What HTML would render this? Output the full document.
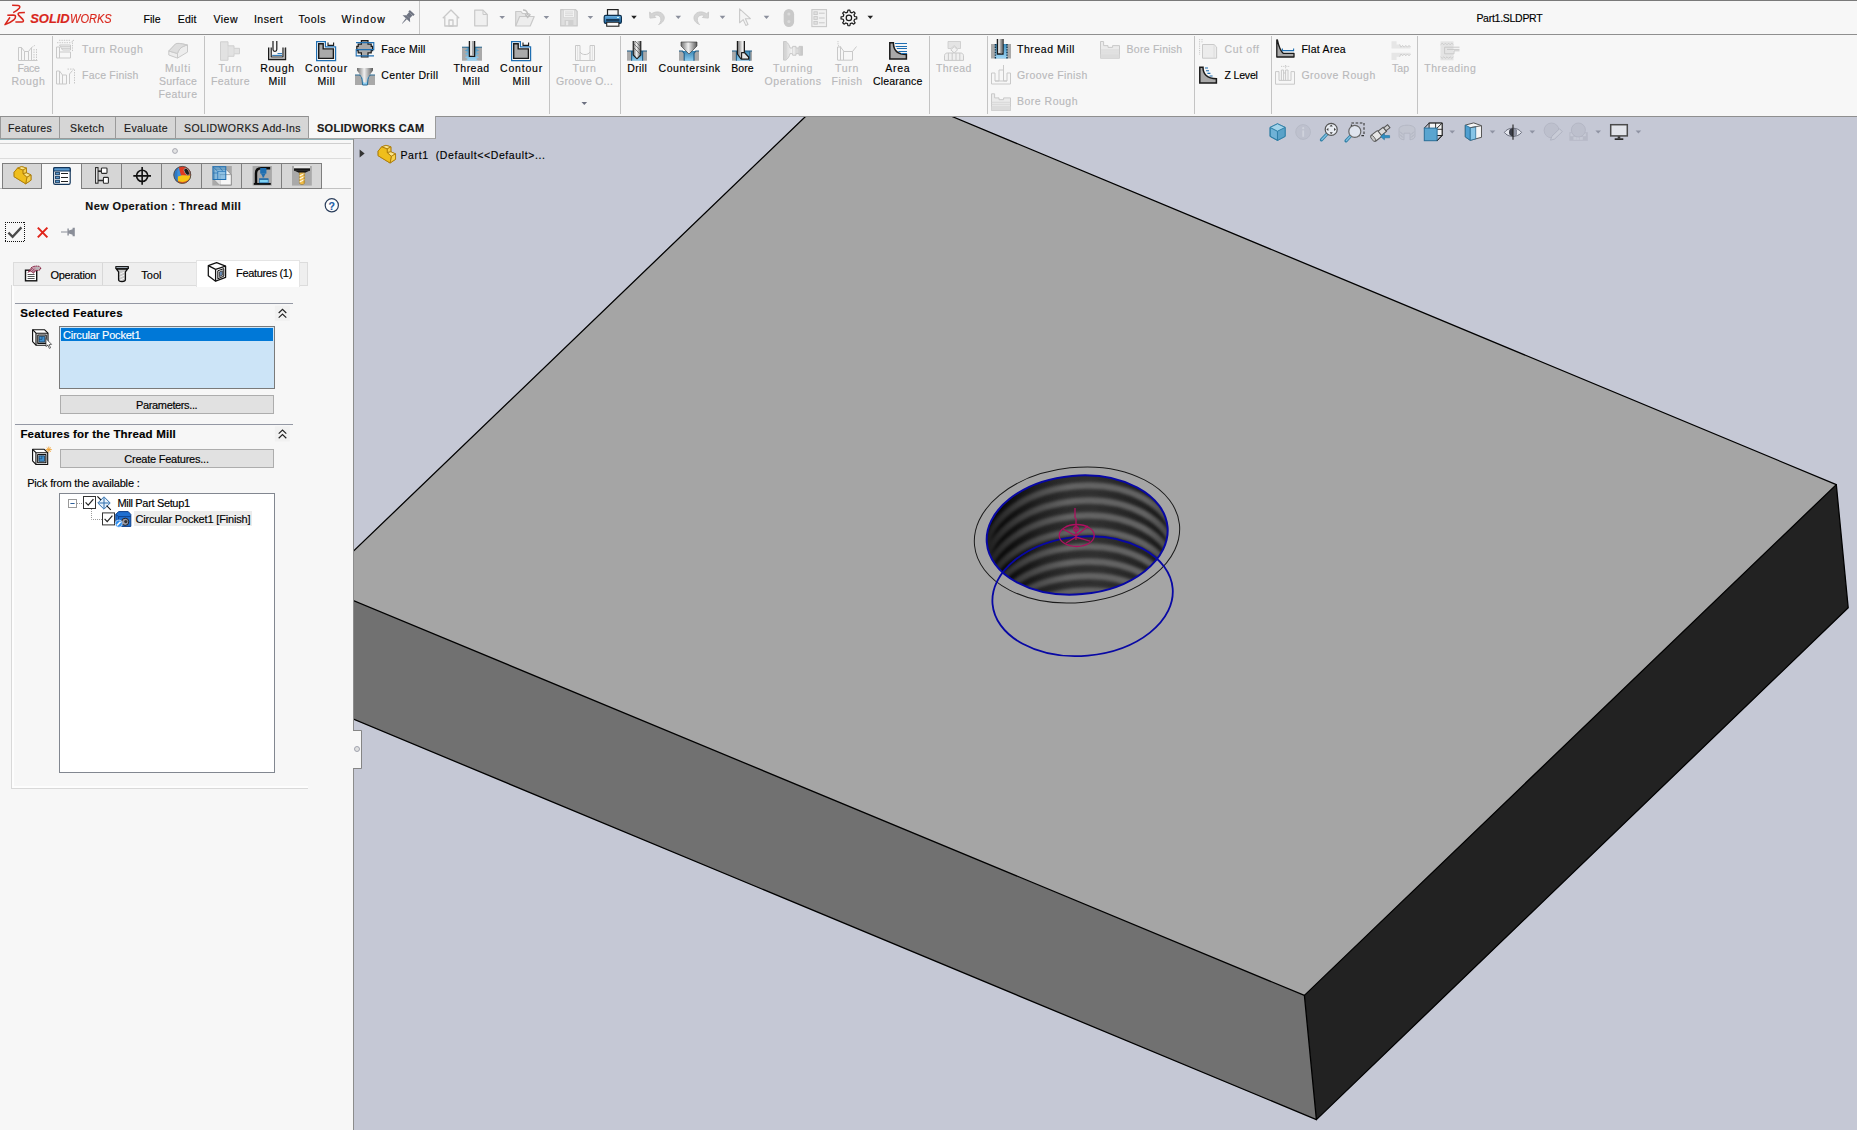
<!DOCTYPE html>
<html><head><meta charset="utf-8"><title>SOLIDWORKS CAM - Part1.SLDPRT</title>
<style>
html,body{margin:0;padding:0;background:#f7f7f7;}
#app{position:relative;width:1857px;height:1130px;overflow:hidden;background:#f7f7f7;font-family:"Liberation Sans",sans-serif;}
.t{position:absolute;white-space:pre;line-height:14px;-webkit-text-stroke:0.15px currentColor;}
.r{position:absolute;box-sizing:border-box;}
svg{position:absolute;left:0;top:0;}
</style></head>
<body><div id="app">
<div class="r" style="left:0px;top:0px;width:1857px;height:1px;background:#7a7a7a;"></div>
<div class="r" style="left:0px;top:34px;width:1857px;height:1px;background:#8f8f8f;"></div>
<div class="r" style="left:419px;top:1px;width:1px;height:33px;background:#c8c8c8;"></div>
<div class="r" style="left:0px;top:116px;width:309px;height:1px;background:#8f8f8f;"></div>
<div class="r" style="left:435px;top:116px;width:1422px;height:1px;background:#8f8f8f;"></div>
<div class="r" style="left:52px;top:36px;width:1px;height:78px;background:#c4c4c4;"></div>
<div class="r" style="left:204px;top:36px;width:1px;height:78px;background:#c4c4c4;"></div>
<div class="r" style="left:549px;top:36px;width:1px;height:78px;background:#c4c4c4;"></div>
<div class="r" style="left:620px;top:36px;width:1px;height:78px;background:#c4c4c4;"></div>
<div class="r" style="left:929px;top:36px;width:1px;height:78px;background:#c4c4c4;"></div>
<div class="r" style="left:987px;top:36px;width:1px;height:78px;background:#c4c4c4;"></div>
<div class="r" style="left:1194px;top:36px;width:1px;height:78px;background:#c4c4c4;"></div>
<div class="r" style="left:1271px;top:36px;width:1px;height:78px;background:#c4c4c4;"></div>
<div class="r" style="left:1417px;top:36px;width:1px;height:78px;background:#c4c4c4;"></div>
<div class="r" style="left:0px;top:117px;width:436px;height:22px;background:#d6d6d6;border:1px solid #9a9a9a;border-top:none;"></div>
<div class="r" style="left:59px;top:117px;width:1px;height:21px;background:#9a9a9a;"></div>
<div class="r" style="left:115px;top:117px;width:1px;height:21px;background:#9a9a9a;"></div>
<div class="r" style="left:175px;top:117px;width:1px;height:21px;background:#9a9a9a;"></div>
<div class="r" style="left:308px;top:116px;width:128px;height:23px;background:#f7f7f7;border-right:1px solid #9a9a9a;border-left:1px solid #9a9a9a;border-bottom:1px solid #a6a6a6;"></div>
<div class="r" style="left:0px;top:139px;width:353px;height:991px;background:#f7f7f7;"></div>
<div class="r" style="left:353px;top:139px;width:1px;height:991px;background:#8c8c8c;"></div>
<div class="r" style="left:0px;top:139px;width:353px;height:1px;background:#8fb2b8;"></div>
<div class="r" style="left:0px;top:143px;width:351px;height:1px;background:#cfcfcf;"></div>
<div class="r" style="left:0px;top:158px;width:351px;height:1px;background:#dcdcdc;"></div>
<div class="r" style="left:0px;top:188px;width:351px;height:1px;background:#c2c2c2;"></div>
<div class="r" style="left:2px;top:163px;width:320px;height:26px;background:#d6d6d6;border:1px solid #7e7e7e;"></div>
<div class="r" style="left:41px;top:164px;width:1px;height:24px;background:#7e7e7e;"></div>
<div class="r" style="left:81px;top:164px;width:1px;height:24px;background:#7e7e7e;"></div>
<div class="r" style="left:121px;top:164px;width:1px;height:24px;background:#7e7e7e;"></div>
<div class="r" style="left:161px;top:164px;width:1px;height:24px;background:#7e7e7e;"></div>
<div class="r" style="left:201px;top:164px;width:1px;height:24px;background:#7e7e7e;"></div>
<div class="r" style="left:241px;top:164px;width:1px;height:24px;background:#7e7e7e;"></div>
<div class="r" style="left:281px;top:164px;width:1px;height:24px;background:#7e7e7e;"></div>
<div class="r" style="left:41px;top:163px;width:41px;height:26px;background:#f7f7f7;border:1px solid #7e7e7e;border-bottom:none;"></div>
<div class="r" style="left:13px;top:262px;width:295px;height:24px;background:#efefef;border:1px solid #dcdcdc;"></div>
<div class="r" style="left:102px;top:263px;width:1px;height:22px;background:#d8d8d8;"></div>
<div class="r" style="left:196px;top:260px;width:104px;height:27px;background:#ffffff;border:1px solid #e4e4e4;border-bottom:none;"></div>
<div class="r" style="left:12px;top:286px;width:2px;height:502px;background:#fdfdfd;"></div>
<div class="r" style="left:12px;top:786px;width:296px;height:2px;background:#fdfdfd;"></div>
<div class="r" style="left:11px;top:285px;width:1px;height:504px;background:#d9d9d9;"></div>
<div class="r" style="left:11px;top:788px;width:297px;height:1px;background:#d9d9d9;"></div>
<div class="r" style="left:15px;top:303px;width:278px;height:1px;background:#9498a4;"></div>
<div class="r" style="left:59px;top:326px;width:216px;height:63px;background:#cce4f7;border:1px solid #7a7a7a;"></div>
<div class="r" style="left:61px;top:328px;width:212px;height:13px;background:#0078d7;"></div>
<div class="r" style="left:60px;top:395px;width:214px;height:19px;background:#e1e1e1;border:1px solid #adadad;"></div>
<div class="r" style="left:15px;top:424px;width:278px;height:1px;background:#9498a4;"></div>
<div class="r" style="left:60px;top:449px;width:214px;height:19px;background:#e1e1e1;border:1px solid #adadad;"></div>
<div class="r" style="left:59px;top:493px;width:216px;height:280px;background:#fff;border:1px solid #828790;"></div>
<div class="r" style="left:134px;top:511px;width:118px;height:15px;background:#ececec;"></div>
<div class="r" style="left:354px;top:139px;width:1503px;height:991px;background:#c5c8d5;"></div>
<div class="r" style="left:436px;top:117px;width:1421px;height:22px;background:#c5c8d5;"></div>
<svg width="1857" height="1130" viewBox="0 0 1857 1130">

<defs>
<clipPath id="vp"><path d="M354 139 H436 V117 H1857 V1130 H354 Z"/></clipPath>
<clipPath id="hole"><ellipse cx="1077.2" cy="535" rx="90.7" ry="59.3" transform="rotate(-5 1077.2 535)"/></clipPath>
<linearGradient id="holeg" x1="0" y1="0" x2="1" y2="0">
<stop offset="0" stop-color="#0c0c0c"/><stop offset="0.3" stop-color="#2a2a2a"/><stop offset="0.6" stop-color="#303030"/><stop offset="1" stop-color="#1a1a1a"/>
</linearGradient>
<linearGradient id="holesh" x1="0" y1="0" x2="1" y2="0">
<stop offset="0" stop-color="#000" stop-opacity="0.75"/><stop offset="0.22" stop-color="#000" stop-opacity="0.35"/><stop offset="0.45" stop-color="#000" stop-opacity="0"/><stop offset="0.85" stop-color="#000" stop-opacity="0"/><stop offset="1" stop-color="#000" stop-opacity="0.35"/>
</linearGradient>
<filter id="blur1" x="-10%" y="-10%" width="120%" height="120%"><feGaussianBlur stdDeviation="1.6"/></filter>
</defs>
<g clip-path="url(#vp)">
<polygon points="805.5,116.5 952,116.5 1836.3,484.6 1304.4,995.4 354,600.8 354,550.6" fill="#a5a5a5"/>
<polygon points="354,600.8 1304.4,995.4 1316.4,1119.6 354,719.4" fill="#717171"/>
<polygon points="1304.4,995.4 1836.3,484.6 1848.2,607.8 1316.4,1119.6" fill="#222222"/>
<g fill="none" stroke="#000" stroke-width="1.3" stroke-linejoin="round" stroke-linecap="round">
<polyline points="354,550.6 805.5,116.5"/>
<polyline points="952,116.5 1836.3,484.6 1304.4,995.4 354,600.8"/>
<polyline points="1836.3,484.6 1848.2,607.8 1316.4,1119.6 354,719.4"/>
<polyline points="1304.4,995.4 1316.4,1119.6"/>
</g>
<ellipse cx="1077.2" cy="535" rx="90.7" ry="59.3" transform="rotate(-5 1077.2 535)" fill="url(#holeg)"/>
<g clip-path="url(#hole)">
<g filter="url(#blur1)" fill="none" stroke="#646464" stroke-width="6.4">
<ellipse cx="1080" cy="548" rx="95" ry="62" transform="rotate(-5.5 1080 548)"/>
<ellipse cx="1080" cy="563" rx="95" ry="62" transform="rotate(-5.5 1080 563)"/>
<ellipse cx="1080" cy="578" rx="95" ry="62" transform="rotate(-5.5 1080 578)"/>
<ellipse cx="1080" cy="593.5" rx="95" ry="62" transform="rotate(-5.5 1080 593.5)"/>
<ellipse cx="1080" cy="609" rx="95" ry="62" transform="rotate(-5.5 1080 609)"/>
<ellipse cx="1080" cy="624" rx="95" ry="62" transform="rotate(-5.5 1080 624)"/>
<ellipse cx="1080" cy="638.5" rx="95" ry="62" transform="rotate(-5.5 1080 638.5)"/>
<ellipse cx="1080" cy="653" rx="95" ry="62" transform="rotate(-5.5 1080 653)"/>
</g>
<rect x="980" y="470" width="195" height="130" fill="url(#holesh)"/>
</g>
<ellipse cx="1077" cy="535" rx="103" ry="67.5" transform="rotate(-6 1077 535)" fill="none" stroke="#1a1a1a" stroke-width="1"/>
<ellipse cx="1077.2" cy="535" rx="90.7" ry="59.3" transform="rotate(-5 1077.2 535)" fill="none" stroke="#0808a4" stroke-width="2"/>
<ellipse cx="1082.6" cy="596.2" rx="90.4" ry="59.6" transform="rotate(-5 1082.6 596.2)" fill="none" stroke="#0808a4" stroke-width="1.8"/>
<g fill="none" stroke="#ae1060" stroke-width="1.3">
<ellipse cx="1076.7" cy="535.5" rx="17.5" ry="11"/>
<path d="M1075 508 V518 M1076 518 V540 M1063 529 L1076 536 L1088 526 M1066 543 L1076 537 L1090 541"/>
<circle cx="1076" cy="529" r="2.3"/>
</g>
</g>

<defs>
<linearGradient id="metal" x1="0" y1="0" x2="1" y2="0"><stop offset="0" stop-color="#6e6e6e"/><stop offset="0.45" stop-color="#f0f0f0"/><stop offset="1" stop-color="#5a5a5a"/></linearGradient>
<linearGradient id="metalL" x1="0" y1="0" x2="1" y2="0"><stop offset="0" stop-color="#cfcfcf"/><stop offset="0.45" stop-color="#f4f4f4"/><stop offset="1" stop-color="#c4c4c4"/></linearGradient>
<linearGradient id="blueh" x1="0" y1="0" x2="0" y2="1"><stop offset="0" stop-color="#3f8fbf"/><stop offset="1" stop-color="#9fd6f5"/></linearGradient>
<linearGradient id="blueh2" x1="0" y1="0" x2="0" y2="1"><stop offset="0" stop-color="#3a86b4"/><stop offset="1" stop-color="#8ccbee"/></linearGradient>
<linearGradient id="prn" x1="0" y1="0" x2="0" y2="1"><stop offset="0" stop-color="#6db3e3"/><stop offset="1" stop-color="#165f9c"/></linearGradient>
<radialGradient id="ballg" cx="0.35" cy="0.3" r="0.8"><stop offset="0" stop-color="#e8e8ee"/><stop offset="1" stop-color="#b0b3c0"/></radialGradient>
</defs>
<g fill="none" stroke="#d9261c" stroke-width="1.55" stroke-linecap="butt" stroke-linejoin="round">
<path d="M12.1 5.3 L18.2 5.5 C20 5.6 20.2 7 19.2 8.2 C17.8 9.8 15.6 11.4 13.2 12.6"/>
<path d="M7.3 15.3 L13.2 15 C16.2 15 16.2 17.8 13.8 19.8 C11.4 21.8 8.4 23.4 5 24.6 L10 17.2"/>
<path d="M24.9 12.4 L19.6 12.7 C17.8 12.8 17.8 14.4 18.8 15.4 L22.8 19.4 C24 20.8 23.4 22 21.8 22 L15.4 22.1"/>
</g>
<g transform="translate(401,11)" ><g transform="rotate(42 6.5 6.5)" fill="#6f7482"><rect x="3.2" y="-0.6" width="6.6" height="2.2"/><rect x="4.2" y="1.6" width="4.6" height="4"/><path d="M1.4 8.2 L4.2 5.4 H8.8 L11.6 8.2 Z"/><path d="M5.8 8.2 H7.2 L6.7 14.6 H6.3 Z"/></g></g>
<g transform="translate(442,9)" ><g fill="none" stroke="#c9c9c9" stroke-width="1.3" stroke-linejoin="round"><path d="M0.8 9.3 L9 1 L17.2 9.3"/><path d="M2.8 8 V17 H15.2 V8"/><rect x="7" y="11" width="4" height="6"/></g></g>
<g transform="translate(474,9.5)" ><path d="M0.7 0.7 H9 L13.3 5 V16.3 H0.7 Z" fill="#f0f0f0" stroke="#c9c9c9" stroke-width="1.2" stroke-linejoin="round"/><path d="M9 0.7 V5 H13.3" fill="none" stroke="#c9c9c9" stroke-width="1"/></g>
<polygon points="499.4,15.9 505.0,15.9 502.2,19.1" fill="#8b8f9c"/>
<g transform="translate(515,9)" ><path d="M0.7 17 V2.5 H6 L7.5 4.5 H14 V7.5" fill="#e4e4e4" stroke="#c9c9c9" stroke-width="1.2" stroke-linejoin="round"/><path d="M0.7 17 L4.6 7.5 H19.2 L15.2 17 Z" fill="#ededed" stroke="#c9c9c9" stroke-width="1.2" stroke-linejoin="round"/><path d="M8 1 C11 1 12.6 3 12.6 6 M10.2 5.2 L12.7 8.4 L15.4 5.2" fill="none" stroke="#bdbdbd" stroke-width="1.4"/></g>
<polygon points="543.6,15.9 549.1999999999999,15.9 546.4,19.1" fill="#8b8f9c"/>
<g transform="translate(560,9)" ><path d="M0.7 0.7 H15.6 L17.2 2.3 V16.9 H0.7 Z" fill="#dedede" stroke="#c9c9c9" stroke-width="1.2" stroke-linejoin="round"/><rect x="3.6" y="0.9" width="10.8" height="7.6" fill="#f2f2f2" stroke="#d0d0d0" stroke-width="0.6"/><path d="M5 3 H13 M5 4.8 H13 M5 6.6 H13" stroke="#cfcfcf" stroke-width="0.7"/><rect x="4.6" y="11" width="8.8" height="5.9" fill="#d0d0d0"/><rect x="6" y="12" width="2.2" height="4.2" fill="#e8e8e8"/></g>
<polygon points="587.6,15.9 593.1999999999999,15.9 590.4,19.1" fill="#8b8f9c"/>
<g transform="translate(603.5,9)" ><rect x="4" y="0.6" width="10.6" height="7" fill="#f4f4f4" stroke="#222" stroke-width="1.2"/><rect x="0.7" y="6.4" width="17.2" height="8" rx="1.6" fill="url(#prn)" stroke="#0d2f4d" stroke-width="1.2"/><rect x="2.6" y="10.2" width="13.4" height="1.5" fill="#0c2238"/><rect x="3.2" y="13.2" width="12.2" height="4" fill="#fafafa" stroke="#222" stroke-width="1.1"/><rect x="13.6" y="8" width="1.8" height="1" fill="#dff"/></g>
<polygon points="631.2,15.700000000000001 636.8,15.700000000000001 634,18.900000000000002" fill="#222"/>
<g transform="translate(649,10.5)" ><path d="M0.6 1.6 L0.9 7.6 L6.8 7 L5 5.2 C7.6 3.6 11.2 5 11.8 8.2 C12.3 10.6 11 12.8 9.6 14 C13.6 12.6 15.6 9.4 15.2 6.6 C14.6 2.2 8.6 -0.6 2.6 3.2 Z" fill="#d4d4d4" stroke="#c9c9c9" stroke-width="0.9" stroke-linejoin="round"/></g>
<polygon points="675.5,15.700000000000001 681.0999999999999,15.700000000000001 678.3,18.900000000000002" fill="#8b8f9c"/>
<g transform="translate(693,10.5)" ><g transform="translate(16.2 0) scale(-1 1)"><path d="M0.6 1.6 L0.9 7.6 L6.8 7 L5 5.2 C7.6 3.6 11.2 5 11.8 8.2 C12.3 10.6 11 12.8 9.6 14 C13.6 12.6 15.6 9.4 15.2 6.6 C14.6 2.2 8.6 -0.6 2.6 3.2 Z" fill="#d4d4d4" stroke="#c9c9c9" stroke-width="0.9" stroke-linejoin="round"/></g></g>
<polygon points="719.7,15.700000000000001 725.3,15.700000000000001 722.5,18.900000000000002" fill="#8b8f9c"/>
<g transform="translate(739,8)" ><path d="M0.6 0.8 V14.8 L4.2 11.6 L6.8 17.4 L9 16.4 L6.4 10.8 L11.4 10.6 Z" fill="#f4f4f4" stroke="#c9c9c9" stroke-width="1.1" stroke-linejoin="round"/></g>
<polygon points="763.7,15.700000000000001 769.3,15.700000000000001 766.5,18.900000000000002" fill="#8b8f9c"/>
<g transform="translate(783.7,9)" ><rect x="0" y="0" width="10.4" height="18" rx="5.2" fill="#c9c9c9"/><circle cx="5.2" cy="5" r="1.5" fill="#dadada"/><circle cx="5.2" cy="12.6" r="1.5" fill="#dadada"/></g>
<g transform="translate(811.3,9)" ><rect x="0.6" y="0.6" width="14.6" height="17" fill="#f1f1f1" stroke="#c9c9c9" stroke-width="1.1"/><g fill="#e2e2e2" stroke="#c9c9c9" stroke-width="0.9"><rect x="2.6" y="2.8" width="3.4" height="2.8"/><rect x="2.6" y="7.6" width="3.4" height="2.8"/><rect x="2.6" y="12.4" width="3.4" height="2.8"/></g><path d="M7.6 4.2 H13.4 M7.6 9 H13.4 M7.6 13.8 H13.4" stroke="#c9c9c9" stroke-width="1"/></g>
<path d="M854.64 16.52 L856.74 16.91 L856.74 18.89 L854.64 19.28 L853.93 20.98 L855.14 22.74 L853.74 24.14 L851.98 22.93 L850.28 23.64 L849.89 25.74 L847.91 25.74 L847.52 23.64 L845.82 22.93 L844.06 24.14 L842.66 22.74 L843.87 20.98 L843.16 19.28 L841.06 18.89 L841.06 16.91 L843.16 16.52 L843.87 14.82 L842.66 13.06 L844.06 11.66 L845.82 12.87 L847.52 12.16 L847.91 10.06 L849.89 10.06 L850.28 12.16 L851.98 12.87 L853.74 11.66 L855.14 13.06 L853.93 14.82 Z" fill="#f7f7f7" stroke="#1a1a1a" stroke-width="1.2" stroke-linejoin="round"/><circle cx="848.9" cy="17.9" r="2.7" fill="none" stroke="#1a1a1a" stroke-width="1.2"/>
<polygon points="867.5,15.700000000000001 873.0999999999999,15.700000000000001 870.3,18.900000000000002" fill="#222"/>
<g transform="translate(18,45)" ><g fill="none" stroke="#c9c9c9" stroke-width="1"><path d="M0.5 15.5 V2.5 H3.5 L6.5 6.5 V15.5 M6.5 6.5 H10.5 V15.5 M10.5 6.5 L13.5 2.5 M13.5 2.5 V15.5 M0.5 15.5 H19.5 M3.5 2.5 V15.5"/><path d="M13.5 2.5 L17 0.3 M16 4 V15.5 M18.5 4 V15.5" stroke-dasharray="1.5 1"/></g></g>
<g transform="translate(56,39.5)" ><g fill="none" stroke="#c9c9c9" stroke-width="1"><path d="M3 0.8 H15" stroke-dasharray="1.4 1"/><path d="M15.5 2.5 L18 0.5"/><path d="M1 3.2 H15" stroke-dasharray="1.4 1"/><path d="M0.5 18.5 V7.5 H3.5 V18.5 M3.5 12.5 H14.5 V18.5 H0.5 M3.5 5.5 H14.5 V10.5 H6.5 Z M5 7.2 H14 M6 8.8 H14"/><path d="M16.5 3 V12" stroke-dasharray="1.4 1"/></g></g>
<g transform="translate(56,68.5)" ><g fill="none" stroke="#c9c9c9" stroke-width="1"><path d="M0.5 15.5 V2.5 H3.5 L6.5 6.5 V15.5 M6.5 6.5 H10.5 V15.5 M0.5 15.5 H10.5 M3.5 2.5 V15.5 M13.5 15.5 V5.5 L16.5 2"/><path d="M11.5 0.6 H18.5 M18.5 1 V16" stroke-dasharray="1.5 1"/></g></g>
<g transform="translate(168,42.5)" ><g stroke="#c9c9c9" stroke-width="1" stroke-linejoin="round"><path d="M0.8 8.5 L7.5 1.5 C9 0.6 12 0.6 19.5 2.6 V9.6 L9.5 15.6 L0.8 12.5 Z" fill="#ededed"/><path d="M0.8 8.5 L9.5 11 L9.5 15.6 M9.5 11 C11 6 14 3.6 19.5 2.6" fill="none"/><path d="M7.5 1.5 C9 0.6 12 0.6 19.5 2.6 C14 3.6 11 6 9.5 11 L0.8 8.5 Z" fill="#dedede"/></g></g>
<g transform="translate(220,41.3)" ><path d="M0.5 0.5 H8 V4.5 H14 V7 H19.5 V12.5 H14 V15 H8 V19 H0.5 Z" fill="#e2e2e2" stroke="#d0d0d0" stroke-width="1"/><path d="M8 4.5 V15 M14 7 V12.5" stroke="#d6d6d6" stroke-width="0.8"/></g>
<g transform="translate(268,41)" ><path d="M0.7 6.6 V18.5 H17.5 V6.6" fill="none" stroke="#1a1a1a" stroke-width="1.4"/><path d="M3.2 6.6 V16 H15 V6.6" fill="none" stroke="#1a1a1a" stroke-width="1.2"/><path d="M1.6 7 V17.4 H16.6 V7" fill="none" stroke="#a9a9a9" stroke-width="1"/><path d="M5 0 V8.6 C5 11 8.8 11 8.8 8.6 V0" fill="#f7f7f7" stroke="#1a1a1a" stroke-width="1.2"/><path d="M9.5 12.6 H14 M4.2 14.4 H14" stroke="#1f6fb2" stroke-width="1"/></g>
<g transform="translate(316,41)" ><path d="M0.6 0.6 H9.4 V5.8 H19.6 V19.6 H0.6 Z" fill="#fbfbfb" stroke="#1f6fb2" stroke-width="1.2"/><path d="M2.7 2.7 H7.2 V7.9 H17.4 V17.4 H2.7 Z" fill="#a9a9a9" stroke="#1a1a1a" stroke-width="1.4"/><path d="M12 1.6 V4.4 H17.6 V1.6" fill="none" stroke="#1a1a1a" stroke-width="1.1"/></g>
<g transform="translate(511,41)" ><path d="M0.6 0.6 H9.4 V5.8 H19.6 V19.6 H0.6 Z" fill="#fbfbfb" stroke="#1f6fb2" stroke-width="1.2"/><path d="M2.7 2.7 H7.2 V7.9 H17.4 V17.4 H2.7 Z" fill="#a9a9a9" stroke="#1a1a1a" stroke-width="1.4"/><path d="M12 1.6 V4.4 H17.6 V1.6" fill="none" stroke="#1a1a1a" stroke-width="1.1"/></g>
<g transform="translate(356,40)" ><path d="M5.4 0.7 H12 V4.2 H15.2 V6.4 H16.6 V10.6 H15.2 V12.8 H12 V17 H5.4 V12.8 H2.2 V10.6 H0.8 V6.4 H2.2 V4.2 H5.4 Z" fill="#a9a9a9" stroke="#1a1a1a" stroke-width="1.2"/><path d="M0 2.6 H17.8 V9.6 H0.2 V15.9 H18" fill="none" stroke="#1f6fb2" stroke-width="1.1"/></g>
<g transform="translate(355,68)" ><rect x="0" y="7" width="20" height="10" fill="#a9a9a9"/><path d="M4.4 7 C5.4 7 6.4 8.6 7 11.4 L7.6 17 H12.4 L13 11.4 C13.6 8.6 14.6 7 15.6 7 Z" fill="#8fcdf0" stroke="#2b6b94" stroke-width="1"/><path d="M2 0 H18 V2.6 L12 10.4 V13.4 L10 15 L8 13.4 V10.4 L2 2.6 Z" fill="url(#metal)"/><path d="M0 7 H4.4 M15.6 7 H20" stroke="#2b6b94" stroke-width="1"/></g>
<g transform="translate(462,41)" ><g transform="scale(1.0)"><rect x="0" y="6" width="20" height="13.7" fill="#a9a9a9"/><path d="M2.8 6 L6 7.7 L2.8 9.4 L6 11.1 L2.8 12.8 L6 14.5 L2.8 16.2 L6 17.9 L3.4 19.7 H16.6 L14 17.9 L17.2 16.2 L14 14.5 L17.2 12.8 L14 11.1 L17.2 9.4 L14 7.7 L17.2 6 Z" fill="url(#blueh)"/><path d="M0 6.2 H20" stroke="#2b6b94" stroke-width="1"/><path d="M7.4 0 V15.4 H12.6 V0" fill="#e8e8e8" stroke="#1a1a1a" stroke-width="1.3"/><rect x="10.2" y="0" width="1.6" height="14.8" fill="#9a9a9a"/></g></g>
<g transform="translate(575,45)" ><g fill="none" stroke="#c9c9c9" stroke-width="1"><path d="M0.5 15.5 V0.5 H5 V15.5 M15 15.5 V0.5 H19.5 V15.5 M0.5 15.5 H19.5 M5 7 C7 10.4 13 10.4 15 7"/><path d="M2.6 1 V15 M17.4 1 V15" stroke="#e0e0e0"/></g></g>
<polygon points="581.5,101.9 587.0999999999999,101.9 584.3,105.1" fill="#6c7080"/>
<g transform="translate(627,41)" ><rect x="0" y="10" width="20" height="9.7" fill="#a9a9a9"/><rect x="4.6" y="10" width="11" height="9.7" fill="url(#blueh2)"/><path d="M4.6 10 V19.7 M15.6 10 V19.7 M0 10 H20" stroke="#1f5f8a" stroke-width="1.1" fill="none"/><path d="M6.2 0 V14 L10 17.8 L13.8 14 V0 Z" fill="url(#metal)"/><path d="M6.2 0 V14 L10 17.8 L13.8 14 V0" fill="none" stroke="#1a1a1a" stroke-width="1.1"/><path d="M7 3 L13 9 M7 7 L13 13 M8 0 L13 5" stroke="#555" stroke-width="0.7"/></g>
<g transform="translate(679,41)" ><rect x="0" y="10" width="20" height="9.7" fill="#a9a9a9"/><path d="M3 10 L5.2 12.4 V19.7 H15 V12.4 L17.2 10 Z" fill="url(#blueh2)"/><path d="M0 10 H3.4 L5.2 12.4 V19.7 M20 10 H16.8 L15 12.4 V19.7" stroke="#1f5f8a" stroke-width="1.1" fill="none"/><path d="M2 1 H18 V5 L10 13 L2 5 Z" fill="url(#metal)" stroke="#333" stroke-width="0.6"/></g>
<g transform="translate(732,41)" ><rect x="0" y="10" width="20" height="9.7" fill="#a9a9a9"/><rect x="4.4" y="10" width="13.4" height="9.7" fill="url(#blueh2)"/><path d="M4.4 10 V19.7 M17.8 10 V19.7 M0 10 H20" stroke="#1f5f8a" stroke-width="1.1" fill="none"/><path d="M5.4 0 V13 L9 18 H16.6 V16 L12.4 11.6 V0 Z" fill="url(#metal)"/><path d="M5.4 0 V13 L9 18 H16.6 V16 L12.4 11.6 V0" fill="none" stroke="#1a1a1a" stroke-width="1.2" stroke-linejoin="round"/><path d="M9.6 11.6 H12.4 L16.6 16 V18 H9.6 Z" fill="#e6e6e6" stroke="#1a1a1a" stroke-width="1.1" stroke-linejoin="round"/></g>
<g transform="translate(783,41)" ><path d="M0.5 0.5 H3 C5 2 6.6 4.6 7 7 H9.6 V5.4 H13 V7 H16 V5.4 H19.5 V14.2 H16 V12.6 H13 V14.2 H9.6 V12.6 H7 C6.6 15 5 17.6 3 19.1 H0.5 Z" fill="url(#metalL)" stroke="#c9c9c9" stroke-width="1"/><path d="M3 0.5 V19 M9.6 7 V12.6 M13 7 V12.6 M16 7 V12.6" stroke="#d2d2d2" stroke-width="0.8"/></g>
<g transform="translate(837,41)" ><g fill="none" stroke="#c9c9c9" stroke-width="1"><path d="M0.5 19 V6 H3.5 V19 M6.5 19 V10.5 H15.5 V19 M0.5 19.2 H15.5 M3.5 6 L7 10.5 M3.5 6 V19 M9 10.5 H15.5 L19.5 5.5"/><path d="M1 0 V4 M1 4.4 L5 6.6" stroke-dasharray="1.2 1"/></g></g>
<g transform="translate(889,42)" ><path d="M0.8 0.8 H4.4 C4.4 8 8 12.6 17.4 12.6 V17 H0.8 Z" fill="#a9a9a9" stroke="#1a1a1a" stroke-width="1.5" stroke-linejoin="miter"/><path d="M6 1.5 H18 M6.6 4.5 H18 M7.8 6.5 H18 M9.4 9.5 H18 M12 11.5 H18" stroke="#1f6fb2" stroke-width="1"/></g>
<g transform="translate(944,41)" ><path d="M4 0.5 H16.5 V7.5 H13.5 L10.2 4.6 L7 7.5 H4 Z" fill="#e4e4e4" stroke="#c9c9c9" stroke-width="0.8"/><path d="M10.2 5.6 L13.6 8.8 L10.2 12 L6.8 8.8 Z" fill="#f2f2f2" stroke="#c9c9c9" stroke-width="1"/><path d="M0.5 19.4 V14.6 C0.5 13 2 12 3.4 12 H16.6 C18 12 19.5 13 19.5 14.6 V19.4 Z M4.4 12 V19.4 M8.2 12 V19.4 M12 12 V19.4 M15.8 12 V19.4" fill="#f0f0f0" stroke="#c9c9c9" stroke-width="1"/></g>
<g transform="translate(991,39)" ><rect x="0" y="5" width="20" height="14.5" fill="#a9a9a9"/><rect x="4.4" y="5" width="11.6" height="14.5" fill="url(#blueh)"/><path d="M4.4 5 V19.5 M16 5 V19.5" stroke="#0d3550" stroke-width="1.4" stroke-dasharray="1.4 1.2"/><path d="M6.4 0 V15 H12 V0" fill="#d8d8d8" stroke="#1a1a1a" stroke-width="1.3"/><rect x="9.4" y="0" width="1.8" height="14.4" fill="#8a8a8a"/></g>
<g transform="translate(991,65)" ><g fill="none" stroke="#c9c9c9" stroke-width="1"><path d="M0.5 19 V8 H4 V16 H8 V5 H12.5 V16 H16 V8 H19.5 V19 Z"/><path d="M12.5 0 V16" /><path d="M4 16 H16"/></g></g>
<g transform="translate(991,93.3)" ><path d="M0.5 0.5 H3.6 V4.6 H8 V6.4 H12.6 V4.6 H19.5 V17.2 H0.5 Z" fill="#ebebeb" stroke="#c9c9c9" stroke-width="1"/><path d="M0.5 9 H19.5 M0.5 11 H19.5 M0.5 13 H19.5" stroke="#d4d4d4" stroke-width="0.9"/><rect x="0.5" y="13.4" width="19" height="3.8" fill="#dcdcdc"/></g>
<g transform="translate(1100,41)" ><path d="M0.5 0.5 H3.6 V4.6 H8 V6.4 H12.6 V4.6 H19.5 V17.2 H0.5 Z" fill="#ebebeb" stroke="#c9c9c9" stroke-width="1"/><path d="M0.5 9 H19.5 M0.5 11 H19.5 M0.5 13 H19.5" stroke="#d4d4d4" stroke-width="0.9"/><rect x="0.5" y="13.4" width="19" height="3.8" fill="#dcdcdc"/></g>
<g transform="translate(1199,39)" ><path d="M0.6 0 V16" stroke="#c9c9c9" stroke-width="1" stroke-dasharray="1.2 1"/><path d="M3 0 V4" stroke="#c9c9c9" stroke-width="1" stroke-dasharray="1.2 1"/><path d="M3.5 5.5 H15 L17.6 8 V19.2 H3.5 Z" fill="#ececec" stroke="#c9c9c9" stroke-width="1"/><path d="M15 5.5 V19" stroke="#dadada" stroke-width="0.8"/></g>
<g transform="translate(1199,66.4)" ><path d="M0.8 0.8 H4 C4 7.6 8 12.4 17.4 12.4 V16.6 H0.8 Z" fill="#a9a9a9" stroke="#1a1a1a" stroke-width="1.5"/><path d="M6 1.6 H9 M7 4.4 H10 M8.4 7 H11.4 M10.6 9.6 H13.6" stroke="#1f6fb2" stroke-width="1.1"/></g>
<g transform="translate(1276,40)" ><path d="M0.8 0 V17 H18 V13.4 H7.4 C5 11.4 2.6 6 1.4 0 Z" fill="#a9a9a9" stroke="#1a1a1a" stroke-width="1.3" stroke-linejoin="round"/><path d="M6.4 8.4 V10.6 H17.6 V8.4" fill="none" stroke="#1f6fb2" stroke-width="1.1"/></g>
<g transform="translate(1275,65)" ><g fill="none" stroke="#c9c9c9" stroke-width="1"><path d="M0.5 19.2 V6.6 H4 V15.4 H16 V6.6 H19.5 V19.2 Z"/><path d="M6.4 15.4 V5 H8.6 V15.4 M10.6 15.4 V5 H13 V15.4 M8.6 8 H10.6"/><path d="M6 1.4 H15 M10.6 0 V4" stroke-dasharray="1.2 1"/></g></g>
<g transform="translate(1391,40.8)" ><path d="M0.5 0.5 H5.6 V3.6 H8.6 L10 6.4 L11.6 4.6 L13.2 6.4 L14.8 4.6 L16.4 6.4 L18 4.6 L19.5 6.2 V7.6 H0.5 Z" fill="#e6e6e6"/><path d="M0.5 19.2 H5.6 V16 H8.6 L10 13.2 L11.6 15 L13.2 13.2 L14.8 15 L16.4 13.2 L18 15 L19.5 13.4 V12 H0.5 Z" fill="#e6e6e6"/><path d="M8.6 3.6 L10 6.4 L11.6 4.6 L13.2 6.4 L14.8 4.6 L16.4 6.4 L18 4.6 L19.5 6.2 M8.6 16 L10 13.2 L11.6 15 L13.2 13.2 L14.8 15 L16.4 13.2 L18 15 L19.5 13.4" fill="none" stroke="#c9c9c9" stroke-width="0.9"/></g>
<g transform="translate(1440,40.8)" ><rect x="0.5" y="0.5" width="13" height="19" fill="#e4e4e4"/><path d="M0.5 4 L2.2 2.4 L3.8 4 L5.4 2.4 L7 4 L8.6 2.4 L10.2 4 L11.8 2.4 L13.5 4 M0.5 16 L2.2 17.6 L3.8 16 L5.4 17.6 L7 16 L8.6 17.6 L10.2 16 L11.8 17.6 L13.5 16" fill="none" stroke="#c9c9c9" stroke-width="0.9"/><path d="M4.6 6.4 H19.5 M4.6 13 H14 V10 H19.5 M4.6 6.4 V13 M7 8.6 H19.5" fill="none" stroke="#c9c9c9" stroke-width="1"/></g>
<g transform="translate(13.6,166.2)" ><g transform="scale(1.0)" stroke="#a87808" stroke-width="0.8" stroke-linejoin="round"><path d="M0.5 6 L4 1.9 L8.1 0.4 L12.9 1.9 V6.7 L17.4 8.7 V14 L12.1 17.6 L0.5 10.5 Z" fill="#ecb818"/><path d="M4 1.9 L8.1 0.4 L12.9 1.9 L9.3 3.9 Z" fill="#fbe58a"/><path d="M9.3 3.9 L12.9 1.9 V6.7 L9.3 7.5 Z" fill="#f6d04a"/><path d="M9.3 7.5 L12.9 6.7 L17.4 8.7 L13.3 11.1 Z" fill="#fbe58a"/><path d="M13.3 11.1 L17.4 8.7 V14 L12.1 17.6 Z" fill="#f6d04a"/><path d="M0.5 6 L4 1.9 L9.3 3.9 V7.5 L13.3 11.1 L12.1 17.6 L0.5 10.5 Z" fill="#efbe1c"/></g></g>
<g transform="translate(53,167)" ><rect x="0.6" y="0.6" width="16.6" height="16.8" rx="1.6" fill="#fff" stroke="#14365a" stroke-width="1.2"/><path d="M0.6 4 V2 C0.6 1.2 1.2 0.6 2 0.6 H15.8 C16.6 0.6 17.2 1.2 17.2 2 V4 Z" fill="#5b9bd0" stroke="#14365a" stroke-width="1.2"/><g fill="#5b9bd0" stroke="#14365a" stroke-width="0.9"><rect x="2.6" y="5.3" width="3.8" height="2.4"/><rect x="2.6" y="9.3" width="3.8" height="2.4"/><rect x="2.6" y="13.3" width="3.8" height="2.4"/></g><path d="M8 6.5 H15 M8 10.5 H15 M8 14.5 H15" stroke="#222" stroke-width="1"/></g>
<g transform="translate(95,167)" ><g fill="#fff" stroke="#2a2a2a" stroke-width="1.1"><path d="M1.6 0.6 V15.4 M1.6 4.4 H7 M1.6 13.6 H8.6" fill="none"/><rect x="0.6" y="0.6" width="2.4" height="15.6" fill="#fff"/><rect x="6.4" y="1" width="5.6" height="5.4" rx="0.8"/><rect x="8.4" y="10.4" width="5" height="5.8" rx="0.8"/><path d="M3 4 H6.4 M3 13.4 H8.4" fill="none"/></g></g>
<g transform="translate(133.3,167)" ><g fill="none" stroke="#111" stroke-width="1.6"><circle cx="8.85" cy="8.85" r="5.6"/><path d="M8.85 0 V17.7 M0 8.85 H17.7"/></g></g>
<g transform="translate(173.4,166.0)" ><clipPath id="ballc"><circle cx="8.9" cy="8.9" r="8.7"/></clipPath><g clip-path="url(#ballc)"><rect x="0" y="0" width="18" height="18" fill="#3f8fd8"/><path d="M5 0 H18 V10.4 L7.6 9.6 Z" fill="#e03a22"/><path d="M4.6 10.4 L8.6 9.2 L18 9.6 V18 H3 Z" fill="#f6c414"/><path d="M1 13 Q9 19.5 18 12 V18 H1 Z" fill="#e2581e"/><path d="M0 0 H5 Q2.6 9 5.4 18 H0 Z" fill="#2f79c4"/><ellipse cx="13.4" cy="5.8" rx="2.1" ry="3.9" transform="rotate(-32 13.4 5.8)" fill="#1c1c1c" stroke="#b8b8b8" stroke-width="0.6"/></g><circle cx="8.9" cy="8.9" r="8.5" fill="none" stroke="#5a5048" stroke-width="1"/></g>
<g transform="translate(212.3,166.0)" ><rect x="0" y="0" width="19.5" height="19.6" fill="#a9a9a9"/><path d="M2.6 3.6 H14 L19 8.6 V19 H7.6 L2.6 14 Z" fill="#f6f6f6" stroke="#777" stroke-width="0.7"/><path d="M2.6 3.6 L7.6 8.6 H19 M7.6 8.6 V19" fill="none" stroke="#888" stroke-width="0.7"/><path d="M2.6 3.6 L7.6 8.6 V19 L2.6 14 Z" fill="#e2e2e2"/><rect x="0.7" y="0.7" width="12.8" height="12.8" fill="#4f9fd8" fill-opacity="0.62" stroke="#1f6fb2" stroke-width="1"/><path d="M0.7 0.7 L5.4 5.4 H13.5 M5.4 5.4 V13.5 M0.7 7 H5.4 M7 0.7 L10.6 5.4" fill="none" stroke="#1f6fb2" stroke-width="0.7"/></g>
<g transform="translate(252.6,166.0)" ><rect x="0" y="0" width="19.3" height="19.6" fill="#a9a9a9"/><path d="M3.4 17.6 V7.4 C3.4 4 5.4 2.2 8.6 2.2 H17.6" fill="none" stroke="#0c0c0c" stroke-width="2.4"/><path d="M1.2 17.9 H18.2" stroke="#0c0c0c" stroke-width="1.9"/><rect x="7.6" y="2" width="6.2" height="5.6" fill="#1f6fb2"/><path d="M8.2 7.6 H13.2 L11.6 10.2 V11.6 H9.8 V10.2 Z" fill="#1f6fb2"/><rect x="6.8" y="12.8" width="8.8" height="4" fill="#7fd2f2" stroke="#1f6fb2" stroke-width="0.7"/><rect x="6.8" y="12.6" width="8.8" height="1.2" fill="#1a5a94"/></g>
<g transform="translate(292.0,166.0)" ><rect x="0" y="0" width="19.8" height="19.6" fill="#a9a9a9"/><rect x="2" y="0" width="16" height="2.4" fill="#e9e9e9"/><rect x="2" y="2.4" width="16" height="2.4" fill="#161616"/><path d="M2.6 4.8 H17.4 L13 6.8 H7 Z" fill="#161616"/><path d="M7.4 6.8 H12.6 V16.6 C12.6 19.2 7.4 19.2 7.4 16.6 Z" fill="#f0bc48" stroke="#8a6a20" stroke-width="0.5"/><path d="M7.6 10 L12.4 7.6 M7.6 13 L12.4 10.6 M7.6 16 L12.4 13.6" stroke="#fff8e8" stroke-width="1.1"/><rect x="11.4" y="7" width="1.2" height="10" fill="#b88a28" opacity="0.6"/></g>
<circle cx="331.8" cy="205.3" r="6.6" fill="#fdfdfd" stroke="#2b3e5c" stroke-width="1.2"/>
<path d="M5 222.5 H25 M5 241.5 H25 M5.5 222 V242 M24.5 222 V242" fill="none" stroke="#111" stroke-width="1" stroke-dasharray="1 1"/><path d="M8.4 232.6 L12.6 236.8 L21.4 227.4" fill="none" stroke="#4a4a4a" stroke-width="2.3"/>
<path d="M37.8 227.6 L47.4 237.4 M47.4 227.6 L37.8 237.4" stroke="#e0241a" stroke-width="2" fill="none"/>
<g fill="#8a8e98"><rect x="61" y="231.5" width="6.6" height="1"/><path d="M67.4 228.6 H68.8 V230.4 L72.6 229.2 V227.8 H74.8 V236.2 H72.6 V234.8 L68.8 233.6 V235.4 H67.4 Z"/></g>
<g transform="translate(24.6,265.6)" ><rect x="0.9" y="4.6" width="11.2" height="10.6" fill="#fff" stroke="#111" stroke-width="1.4"/><path d="M3 8.9 H10 M3 10.9 H10 M3 12.9 H10" stroke="#555" stroke-width="1"/><path d="M3.4 6.8 L6.6 2.2 C8.4 0.4 11.4 0.4 13.6 0.6 C15.6 0.8 16.6 2 16 3.4 C15.4 4.6 13.4 5 11.8 4.8 L8.6 7.6 L6.2 5.4 Z" fill="#c9a0b0" stroke="#7a1030" stroke-width="1" stroke-dasharray="1.2 0.6"/><path d="M11 1.4 C13 1 15.4 1.4 15.2 2.8 C15 4 13 4.2 11.6 4 Z" fill="#b8b8b8"/><path d="M5 5.6 L8 2.4 M6.6 6.6 L9.8 3.2 M8.4 7 L11 4.4" stroke="#7a1030" stroke-width="0.7"/></g>
<g transform="translate(114.8,265.8)" ><path d="M1.6 3.2 H12.8 L10.6 6 V14 C10.6 16.4 3.8 16.4 3.8 14 V6 Z" fill="#c8c8c8" stroke="#111" stroke-width="1.3" stroke-linejoin="round"/><path d="M5 8.4 L9.4 6.4 M5 11.4 L9.4 9.4 M5 14.4 L9.4 12.4" stroke="#f4f4f4" stroke-width="1"/><rect x="0.4" y="0.3" width="13.8" height="3" rx="0.6" fill="#1c1c1c"/><rect x="1.6" y="1.2" width="11.2" height="1" fill="#9aa4b0"/></g>
<g transform="translate(207.6,262)" ><g transform="scale(1.0)" stroke="#111" stroke-width="1.25" stroke-linejoin="round" fill="#fff"><path d="M9 0.6 L18 4.2 V15.4 L8 19.2 L0.7 13.7 V3.6 Z"/><path d="M0.7 3.6 L8 7.4 L18 4.2 M8 7.4 V19.2" fill="none"/><path d="M10.2 8.8 L16.2 6.6 V14.2 L10.2 16.8 Z" fill="#e8e8e8" stroke-width="1"/><path d="M11.8 10 L14.8 8.8 V13.2 L11.8 14.6 Z" fill="#6a8db8" stroke="#333" stroke-width="0.8"/></g></g>
<g transform="translate(32,329)" ><g transform="scale(1.0)" stroke="#111" stroke-width="1.15" stroke-linejoin="round" fill="#fff"><path d="M0.6 0.7 H12.4 L16 4.2 V16.2 H4 L0.6 12.6 Z"/><path d="M0.6 0.7 L4 4.2 H16 M4 4.2 V16.2" fill="none"/><rect x="5.8" y="6" width="8.4" height="8.4" fill="#d4d4d4" stroke-width="1.1"/><rect x="7.2" y="7.4" width="5.6" height="5.6" fill="#3f8fcf" stroke="#123a5c" stroke-width="0.8"/><path d="M10 7.4 V10.4 H7.2" fill="none" stroke="#123a5c" stroke-width="0.6"/></g></g>
<path d="M46 338.6 V346.6 L47.8 345 L49.3 348.4 L50.6 347.8 L49.1 344.6 L51.6 344.4 Z" fill="#fff" stroke="#333" stroke-width="0.7"/>
<g transform="translate(32,448.6)" ><g transform="scale(0.98)" stroke="#111" stroke-width="1.15" stroke-linejoin="round" fill="#fff"><path d="M0.6 0.7 H12.4 L16 4.2 V16.2 H4 L0.6 12.6 Z"/><path d="M0.6 0.7 L4 4.2 H16 M4 4.2 V16.2" fill="none"/><rect x="5.8" y="6" width="8.4" height="8.4" fill="#d4d4d4" stroke-width="1.1"/><rect x="7.2" y="7.4" width="5.6" height="5.6" fill="#3f8fcf" stroke="#123a5c" stroke-width="0.8"/><path d="M10 7.4 V10.4 H7.2" fill="none" stroke="#123a5c" stroke-width="0.6"/></g></g>
<g stroke="#efa030" stroke-width="0.9"><path d="M48.8 446.6 V452.6 M45.8 449.6 H51.8 M46.7 447.5 L50.9 451.7 M50.9 447.5 L46.7 451.7"/></g>
<rect x="274.90000000000003" y="305.8" width="15" height="15" fill="#f1f1f1"/><path d="M278.7 313.0 L282.5 309.40000000000003 L286.3 313.0 M278.7 317.6 L282.5 314.0 L286.3 317.6" fill="none" stroke="#222" stroke-width="1.2"/>
<rect x="274.90000000000003" y="426.4" width="15" height="15" fill="#f1f1f1"/><path d="M278.7 433.59999999999997 L282.5 430.0 L286.3 433.59999999999997 M278.7 438.2 L282.5 434.59999999999997 L286.3 438.2" fill="none" stroke="#222" stroke-width="1.2"/>
<g fill="none" stroke="#9a9a9a" stroke-width="1" stroke-dasharray="1 1"><path d="M77 503.5 H83 M91.5 509 V519.5 H102"/></g>
<rect x="68.5" y="499.5" width="8" height="8" fill="#fff" stroke="#9a9a9a" stroke-width="1"/><path d="M70.4 503.5 H74.6" stroke="#2d5f9a" stroke-width="1"/>
<rect x="83.5" y="496.5" width="12" height="12" fill="#fff" stroke="#333" stroke-width="1"/><path d="M85.6 502.4 L88.2 505.2 L93.4 499.2" fill="none" stroke="#222" stroke-width="1.2"/>
<rect x="102.5" y="512.9" width="12" height="12" fill="#fff" stroke="#333" stroke-width="1"/><path d="M104.6 518.8 L107.2 521.6 L112.4 515.6" fill="none" stroke="#222" stroke-width="1.2"/>
<g transform="translate(97,496)" ><path d="M7 0.8 L13.2 7 L7 13.2 L0.8 7 Z" fill="#e4f0fa" stroke="#2f6fae" stroke-width="1"/><path d="M7 2 V12 M2 7 H12" stroke="#2f6fae" stroke-width="1"/><path d="M0.4 0.4 L4 4 M9.6 9.6 L13.8 13.8" stroke="#111" stroke-width="1.1"/></g>
<g transform="translate(115.2,511)" ><path d="M0.6 3.4 L3.4 0.6 H13 L15.6 3.4 V15.4 H3.4 L0.6 12.6 Z" fill="#1f6fd0" stroke="#0d3f8a" stroke-width="1"/><path d="M0.6 3.4 L3.4 5.6 H15.6 M3.4 5.6 V15.4" fill="none" stroke="#0d3f8a" stroke-width="0.9"/><circle cx="10" cy="10.8" r="3.6" fill="#9a9aa8" stroke="#222" stroke-width="1"/><circle cx="10.6" cy="10.6" r="1.6" fill="#333"/><circle cx="3.6" cy="12.6" r="3.6" fill="#2f8ff0" stroke="#fff" stroke-width="0.6"/><path d="M1.8 14.4 L5.4 10.8" stroke="#fff" stroke-width="1.5"/></g>
<circle cx="175" cy="151" r="2.4" fill="#e4e4e4" stroke="#a0a2ac" stroke-width="0.9"/>
<rect x="352.6" y="731" width="8.4" height="37" fill="#f7f7f7"/><path d="M353.5 730.5 H361.5 V768.5 H353.5" fill="none" stroke="#858585" stroke-width="1"/><circle cx="357" cy="749" r="2.5" fill="#e0e0e0" stroke="#9a9ca8" stroke-width="0.9"/>
<polygon points="359.6,149.4 359.6,157.4 364.6,153.4" fill="#333"/>
<g transform="translate(377.6,144.9)" ><g transform="scale(1.03)" stroke="#a87808" stroke-width="0.8" stroke-linejoin="round"><path d="M0.5 6 L4 1.9 L8.1 0.4 L12.9 1.9 V6.7 L17.4 8.7 V14 L12.1 17.6 L0.5 10.5 Z" fill="#ecb818"/><path d="M4 1.9 L8.1 0.4 L12.9 1.9 L9.3 3.9 Z" fill="#fbe58a"/><path d="M9.3 3.9 L12.9 1.9 V6.7 L9.3 7.5 Z" fill="#f6d04a"/><path d="M9.3 7.5 L12.9 6.7 L17.4 8.7 L13.3 11.1 Z" fill="#fbe58a"/><path d="M13.3 11.1 L17.4 8.7 V14 L12.1 17.6 Z" fill="#f6d04a"/><path d="M0.5 6 L4 1.9 L9.3 3.9 V7.5 L13.3 11.1 L12.1 17.6 L0.5 10.5 Z" fill="#efbe1c"/></g></g>
<g transform="translate(1269.7,123.4)" ><path d="M7.8 0.4 L15.4 4 V13 L7.8 17 L0.4 13 V4 Z" fill="#6fb2d6" stroke="#2f7fa6" stroke-width="1"/><path d="M0.4 4 L7.8 7.8 L15.4 4 M7.8 7.8 V17" fill="none" stroke="#2f7fa6" stroke-width="1"/><path d="M7.8 0.4 L15.4 4 L7.8 7.8 L0.4 4 Z" fill="#a4d4ea"/><path d="M7.8 7.8 L15.4 4 V13 L7.8 17 Z" fill="#5aa2c8"/><path d="M7.8 0.4 L15.4 4 V13 L7.8 17 L0.4 13 V4 Z M0.4 4 L7.8 7.8 L15.4 4 M7.8 7.8 V17" fill="none" stroke="#2f7fa6" stroke-width="0.9"/></g>
<g transform="translate(1295.5,124.4)" ><circle cx="7.6" cy="7.6" r="7.4" fill="#bec1ce" stroke="#b4b7c4" stroke-width="0.8"/><rect x="6.8" y="6" width="1.8" height="6.4" fill="#cfd2dc"/><circle cx="7.7" cy="3.8" r="1.1" fill="#cfd2dc"/></g>
<path d="M1327 134 L1321.4 139.8" stroke="#2f7fa6" stroke-width="3.2" stroke-linecap="round"/><path d="M1327 134 L1321.8 139.4" stroke="#7fc0e0" stroke-width="1.4" stroke-linecap="round"/><circle cx="1331.2" cy="129.4" r="6" fill="#e8ecf2" stroke="#555" stroke-width="1.2"/><g fill="#444"><polygon points="1331.2,124.6 1329.6,126.6 1332.8,126.6"/><polygon points="1331.2,134.2 1329.6,132.2 1332.8,132.2"/><polygon points="1326.4,129.4 1328.4,127.8 1328.4,131"/><polygon points="1336,129.4 1334,127.8 1334,131"/></g>
<rect x="1351.4" y="123" width="12.6" height="12.6" fill="none" stroke="#333" stroke-width="1.1" stroke-dasharray="2.6 1.6"/><path d="M1350.6 136 L1346 140.8" stroke="#2f7fa6" stroke-width="3.2" stroke-linecap="round"/><path d="M1350.6 136 L1346.4 140.4" stroke="#7fc0e0" stroke-width="1.4" stroke-linecap="round"/><circle cx="1354.8" cy="131.4" r="6" fill="#dfe4ee" stroke="#666" stroke-width="1.2"/>
<g transform="translate(1372,123.2)" ><g transform="rotate(-38 9 9)"><rect x="-1.6" y="5.4" width="9" height="7.4" rx="1.2" fill="#e6e6e6" stroke="#555" stroke-width="1"/><rect x="7.4" y="6.4" width="6.4" height="5.4" fill="#dcdcdc" stroke="#555" stroke-width="1"/><rect x="13.8" y="7.2" width="5" height="3.8" fill="#d0d0d0" stroke="#555" stroke-width="1"/><ellipse cx="-1" cy="9.1" rx="1.6" ry="3.6" fill="#c8c8c8" stroke="#555" stroke-width="0.8"/></g><path d="M8.6 13.4 L12.4 10.4 V12.4 H17.6 V14.6 H12.4 V16.6 Z" fill="#2f8fc4" stroke="#1f6f9c" stroke-width="0.6"/></g>
<g transform="translate(1398.4,124.6)" ><path d="M0.6 4.6 C0.6 1.4 6 0.6 8.6 0.6 C12 0.6 16.6 1.6 16.6 4.6 V11.6 C16.6 14 13.6 15 11.6 15.2 V8.6 H5.6 V15.2 C3 15 0.6 13.6 0.6 11.6 Z" fill="#c2c5d0" stroke="#b2b5c2" stroke-width="0.9"/><path d="M1.6 7 L4.6 10 M1.6 10 L4.6 13 M12.6 10 L15.6 7 M12.6 13 L15.6 10" stroke="#aeb1be" stroke-width="0.9"/></g>
<g transform="translate(1423.7,122.5)" ><path d="M5.4 0.6 H18.4 V13 L13.4 18.2 M5.4 0.6 L0.6 5.6 M18.4 0.6 L13.4 5.6 M11.9 0.6 V5.6 M18.4 6.8 L13.4 11.8" fill="none" stroke="#222" stroke-width="1"/><rect x="5.4" y="0.6" width="13" height="12.4" fill="#f4f4f4" stroke="#222" stroke-width="1"/><path d="M11.9 0.6 V13 M5.4 6.8 H18.4" stroke="#222" stroke-width="0.9"/><rect x="0.6" y="5.6" width="12.8" height="12.6" fill="#5aa5d0" stroke="#2a6f98" stroke-width="1"/><path d="M13.4 5.6 L18.4 0.6 M13.4 18.2 L18.4 13" stroke="#222" stroke-width="1"/></g>
<polygon points="1449.4,130.4 1455.0,130.4 1452.2,133.6" fill="#8f93a3"/>
<g transform="translate(1464.7,122.3)" ><path d="M0.6 2.8 L9 0.6 L16.8 3.4 V15 L5.6 18 L0.6 14.6 Z" fill="#f4f4f4" stroke="#555" stroke-width="1" stroke-linejoin="round"/><path d="M0.6 2.8 L5.6 5.4 V18 L0.6 14.6 Z" fill="#4f9fd0" stroke="#2a6f98" stroke-width="0.9"/><path d="M5.6 5.4 L11 4.4 V16.6 L5.6 18 Z" fill="#86c4e6" stroke="#2a6f98" stroke-width="0.8"/><path d="M5.6 5.4 L16.8 3.4" stroke="#555" stroke-width="0.9"/></g>
<polygon points="1489.7,130.4 1495.3,130.4 1492.5,133.6" fill="#8f93a3"/>
<g transform="translate(1504,125)" ><path d="M0.4 7.4 C4 1.8 13.6 1.8 17.6 7.4 C13.6 12.8 4 12.8 0.4 7.4 Z" fill="#e4e6ee" stroke="#6a6e7c" stroke-width="1"/><circle cx="9" cy="7.2" r="4" fill="#3a3d48"/><path d="M9 3.2 A4 4 0 0 1 9 11.2 Z" fill="#8f93a3"/><path d="M9 -0.4 V14.8" stroke="#222" stroke-width="1.1"/></g>
<polygon points="1529.5,130.4 1535.1,130.4 1532.3,133.6" fill="#8f93a3"/>
<g transform="translate(1543.9,122.6)" ><circle cx="7.6" cy="7.8" r="7.4" fill="#bdc0cd" stroke="#b1b4c2" stroke-width="0.8"/><path d="M6.6 17.6 L8 13.6 L15.6 6.2 L18.4 9 L10.8 16.4 Z" fill="#c9ccd7" stroke="#adb0be" stroke-width="0.9"/></g>
<g transform="translate(1569,122.6)" ><rect x="0.4" y="9.6" width="18.4" height="8.6" fill="#b7bac7"/><g fill="#c6c9d5"><rect x="1.4" y="10.6" width="3" height="3"/><rect x="7.4" y="14.2" width="3" height="3"/><rect x="13.8" y="10.6" width="3" height="3"/><rect x="4.4" y="14.2" width="3" height="3"/><rect x="10.8" y="14.2" width="3" height="3"/></g><circle cx="9.4" cy="7.4" r="7" fill="#bdc0cd" stroke="#b1b4c2" stroke-width="0.8"/></g>
<polygon points="1595.4,130.4 1601.0,130.4 1598.2,133.6" fill="#8f93a3"/>
<g transform="translate(1609.9,123.9)" ><rect x="0.8" y="0.8" width="16.6" height="11.2" fill="#e2e4ea" stroke="#4a4a4a" stroke-width="1.5"/><rect x="7.8" y="12.4" width="2.6" height="2.2" fill="#3a3a3a"/><rect x="4.8" y="14.4" width="8.6" height="1.7" fill="#2a2a2a"/></g>
<polygon points="1635.6000000000001,130.4 1641.2,130.4 1638.4,133.6" fill="#8f93a3"/>
</svg>
<span class="t" style="left:143.60px;top:12.06px;font-size:10.5px;color:#000;letter-spacing:-0.005px;">File</span>
<span class="t" style="left:177.80px;top:12.06px;font-size:10.5px;color:#000;letter-spacing:0.152px;">Edit</span>
<span class="t" style="left:213.50px;top:12.06px;font-size:10.5px;color:#000;letter-spacing:0.483px;">View</span>
<span class="t" style="left:254.00px;top:12.06px;font-size:10.5px;color:#000;letter-spacing:0.457px;">Insert</span>
<span class="t" style="left:298.50px;top:12.06px;font-size:10.5px;color:#000;letter-spacing:0.598px;">Tools</span>
<span class="t" style="left:341.50px;top:12.06px;font-size:10.5px;color:#000;letter-spacing:1.193px;">Window</span>
<span class="t" style="left:1476.40px;top:10.96px;font-size:10.5px;color:#000;letter-spacing:-0.271px;">Part1.SLDPRT</span>
<span class="t" style="left:17.40px;top:61.06px;font-size:10.5px;color:#b9b9bb;letter-spacing:-0.336px;">Face</span>
<span class="t" style="left:11.40px;top:73.86px;font-size:10.5px;color:#b9b9bb;letter-spacing:0.612px;">Rough</span>
<span class="t" style="left:82.00px;top:42.16px;font-size:10.5px;color:#b9b9bb;letter-spacing:0.654px;">Turn Rough</span>
<span class="t" style="left:82.00px;top:68.16px;font-size:10.5px;color:#b9b9bb;letter-spacing:0.212px;">Face Finish</span>
<span class="t" style="left:165.00px;top:61.06px;font-size:10.5px;color:#b9b9bb;letter-spacing:0.766px;">Multi</span>
<span class="t" style="left:159.00px;top:73.86px;font-size:10.5px;color:#b9b9bb;letter-spacing:0.259px;">Surface</span>
<span class="t" style="left:158.50px;top:86.66px;font-size:10.5px;color:#b9b9bb;letter-spacing:0.402px;">Feature</span>
<span class="t" style="left:218.40px;top:61.06px;font-size:10.5px;color:#b9b9bb;letter-spacing:0.700px;">Turn</span>
<span class="t" style="left:210.90px;top:73.86px;font-size:10.5px;color:#b9b9bb;letter-spacing:0.402px;">Feature</span>
<span class="t" style="left:260.25px;top:61.06px;font-size:10.5px;color:#000;letter-spacing:0.712px;">Rough</span>
<span class="t" style="left:268.50px;top:73.86px;font-size:10.5px;color:#000;letter-spacing:0.564px;">Mill</span>
<span class="t" style="left:305.00px;top:61.06px;font-size:10.5px;color:#000;letter-spacing:0.806px;">Contour</span>
<span class="t" style="left:317.50px;top:73.86px;font-size:10.5px;color:#000;letter-spacing:0.564px;">Mill</span>
<span class="t" style="left:381.30px;top:42.16px;font-size:10.5px;color:#000;letter-spacing:0.266px;">Face Mill</span>
<span class="t" style="left:381.30px;top:68.16px;font-size:10.5px;color:#000;letter-spacing:0.382px;">Center Drill</span>
<span class="t" style="left:453.50px;top:61.06px;font-size:10.5px;color:#000;letter-spacing:0.455px;">Thread</span>
<span class="t" style="left:462.50px;top:73.86px;font-size:10.5px;color:#000;letter-spacing:0.564px;">Mill</span>
<span class="t" style="left:500.00px;top:61.06px;font-size:10.5px;color:#000;letter-spacing:0.806px;">Contour</span>
<span class="t" style="left:512.50px;top:73.86px;font-size:10.5px;color:#000;letter-spacing:0.564px;">Mill</span>
<span class="t" style="left:572.60px;top:61.06px;font-size:10.5px;color:#b9b9bb;letter-spacing:0.700px;">Turn</span>
<span class="t" style="left:556.10px;top:73.86px;font-size:10.5px;color:#b9b9bb;letter-spacing:0.248px;">Groove O...</span>
<span class="t" style="left:627.20px;top:61.06px;font-size:10.5px;color:#000;letter-spacing:0.384px;">Drill</span>
<span class="t" style="left:658.60px;top:61.06px;font-size:10.5px;color:#000;letter-spacing:0.543px;">Countersink</span>
<span class="t" style="left:731.30px;top:61.06px;font-size:10.5px;color:#000;letter-spacing:0.055px;">Bore</span>
<span class="t" style="left:773.00px;top:61.06px;font-size:10.5px;color:#b9b9bb;letter-spacing:0.684px;">Turning</span>
<span class="t" style="left:764.50px;top:73.86px;font-size:10.5px;color:#b9b9bb;letter-spacing:0.564px;">Operations</span>
<span class="t" style="left:835.00px;top:61.06px;font-size:10.5px;color:#b9b9bb;letter-spacing:0.700px;">Turn</span>
<span class="t" style="left:831.50px;top:73.86px;font-size:10.5px;color:#b9b9bb;letter-spacing:0.499px;">Finish</span>
<span class="t" style="left:885.30px;top:61.06px;font-size:10.5px;color:#000;letter-spacing:0.705px;">Area</span>
<span class="t" style="left:873.00px;top:73.86px;font-size:10.5px;color:#000;letter-spacing:0.193px;">Clearance</span>
<span class="t" style="left:935.90px;top:61.06px;font-size:10.5px;color:#b9b9bb;letter-spacing:0.455px;">Thread</span>
<span class="t" style="left:1017.00px;top:42.16px;font-size:10.5px;color:#000;letter-spacing:0.543px;">Thread Mill</span>
<span class="t" style="left:1017.00px;top:68.16px;font-size:10.5px;color:#b9b9bb;letter-spacing:0.411px;">Groove Finish</span>
<span class="t" style="left:1017.00px;top:94.16px;font-size:10.5px;color:#b9b9bb;letter-spacing:0.496px;">Bore Rough</span>
<span class="t" style="left:1126.60px;top:42.16px;font-size:10.5px;color:#b9b9bb;letter-spacing:0.245px;">Bore Finish</span>
<span class="t" style="left:1224.50px;top:42.16px;font-size:10.5px;color:#b9b9bb;letter-spacing:0.608px;">Cut off</span>
<span class="t" style="left:1224.50px;top:68.16px;font-size:10.5px;color:#000;letter-spacing:-0.176px;">Z Level</span>
<span class="t" style="left:1301.40px;top:42.16px;font-size:10.5px;color:#000;letter-spacing:0.275px;">Flat Area</span>
<span class="t" style="left:1301.40px;top:68.16px;font-size:10.5px;color:#b9b9bb;letter-spacing:0.509px;">Groove Rough</span>
<span class="t" style="left:1392.10px;top:61.06px;font-size:10.5px;color:#b9b9bb;letter-spacing:0.024px;">Tap</span>
<span class="t" style="left:1424.30px;top:61.06px;font-size:10.5px;color:#b9b9bb;letter-spacing:0.524px;">Threading</span>
<span class="t" style="left:8.00px;top:120.96px;font-size:10.5px;color:#1a1a1a;letter-spacing:0.320px;">Features</span>
<span class="t" style="left:70.00px;top:120.96px;font-size:10.5px;color:#1a1a1a;letter-spacing:0.400px;">Sketch</span>
<span class="t" style="left:124.00px;top:120.96px;font-size:10.5px;color:#1a1a1a;letter-spacing:0.392px;">Evaluate</span>
<span class="t" style="left:184.00px;top:120.96px;font-size:10.5px;color:#1a1a1a;letter-spacing:0.405px;">SOLIDWORKS Add-Ins</span>
<span class="t" style="left:317.00px;top:120.79px;font-size:11px;color:#1a1a1a;font-weight:bold;letter-spacing:0.258px;">SOLIDWORKS CAM</span>
<span class="t" style="left:85.30px;top:199.19px;font-size:11px;color:#111;font-weight:bold;letter-spacing:0.387px;">New Operation : Thread Mill</span>
<span class="t" style="left:50.50px;top:267.59px;font-size:11px;color:#000;letter-spacing:-0.290px;">Operation</span>
<span class="t" style="left:141.30px;top:267.59px;font-size:11px;color:#000;letter-spacing:0.030px;">Tool</span>
<span class="t" style="left:236.00px;top:265.69px;font-size:11px;color:#000;letter-spacing:-0.326px;">Features (1)</span>
<span class="t" style="left:20.30px;top:305.92px;font-size:11.5px;color:#000;font-weight:bold;letter-spacing:0.245px;">Selected Features</span>
<span class="t" style="left:62.90px;top:327.89px;font-size:11px;color:#fff;letter-spacing:-0.200px;">Circular Pocket1</span>
<span class="t" style="left:136.10px;top:397.59px;font-size:11px;color:#000;letter-spacing:-0.371px;">Parameters...</span>
<span class="t" style="left:20.40px;top:427.22px;font-size:11.5px;color:#000;font-weight:bold;letter-spacing:0.171px;">Features for the Thread Mill</span>
<span class="t" style="left:124.25px;top:451.69px;font-size:11px;color:#000;letter-spacing:-0.231px;">Create Features...</span>
<span class="t" style="left:27.20px;top:476.49px;font-size:11px;color:#000;letter-spacing:-0.175px;">Pick from the available :</span>
<span class="t" style="left:117.50px;top:496.19px;font-size:11px;color:#000;letter-spacing:-0.340px;">Mill Part Setup1</span>
<span class="t" style="left:135.50px;top:512.19px;font-size:11px;color:#000;letter-spacing:-0.176px;">Circular Pocket1 [Finish]</span>
<span class="t" style="left:400.50px;top:147.76px;font-size:10.5px;color:#000;letter-spacing:0.603px;">Part1  (Default&lt;&lt;Default&gt;...</span>
<span class="t" style="left:30.3px;top:10.5px;font-size:13px;line-height:16px;color:#d9261c;font-style:italic;font-weight:bold;letter-spacing:-0.1px;">SOLID</span>
<span class="t" style="left:70.4px;top:10.5px;font-size:13px;line-height:16px;color:#d9261c;font-style:italic;transform:scaleX(0.85);transform-origin:0 0;">WORKS</span>
<span class="t" style="left:328.6px;top:198.6px;font-size:10.5px;font-weight:bold;color:#1f5fa8;">?</span>
</div></body></html>
